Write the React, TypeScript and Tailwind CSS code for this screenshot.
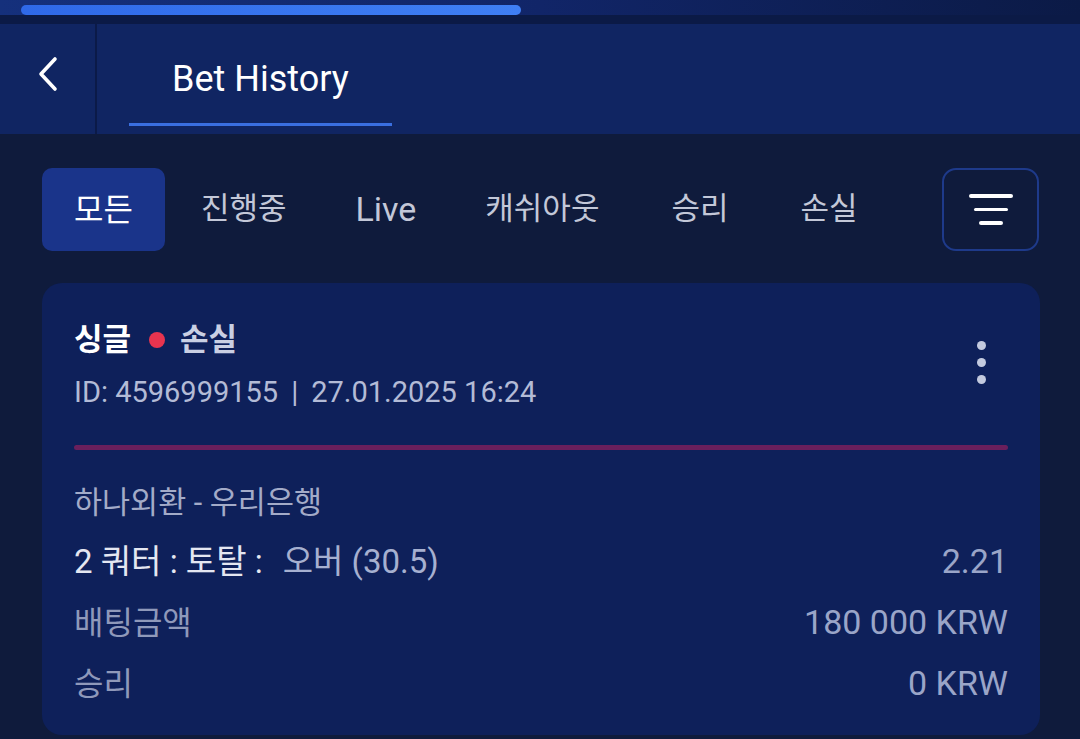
import React from 'react'

const tabs = ['모든', '진행중', 'Live', '캐쉬아웃', '승리', '손실']

const BackIcon = () => (
  <svg width="22" height="36" viewBox="0 0 22 36" fill="none">
    <path d="M18 3 L4 18 L18 33" stroke="#ffffff" strokeWidth="3.6" strokeLinecap="round" strokeLinejoin="round" />
  </svg>
)

const FilterIcon = () => (
  <div className="flex flex-col items-center gap-[10px]">
    <span className="block h-[3.5px] w-[44px] rounded-full bg-white" />
    <span className="block h-[3.5px] w-[34px] rounded-full bg-white" />
    <span className="block h-[3.5px] w-[24px] rounded-full bg-white" />
  </div>
)

const Row: React.FC<{ label: React.ReactNode; value: string }> = ({ label, value }) => (
  <div className="flex h-[61px] items-center justify-between">
    <div>{label}</div>
    <div className="text-[34px] text-[#9aa5c8]">{value}</div>
  </div>
)

export default function App() {
  return (
    <div
      className="min-h-[739px] w-[1080px] bg-[#0f1b3c] text-white"
      style={{ fontFamily: 'Roboto, "Noto Sans CJK KR", sans-serif' }}
    >
      {/* top progress */}
      <div className="h-[24px] bg-[#0b1a46]">
        <div className="h-[15px] bg-linear-to-r from-[#15307c] via-[#112568] to-[#0b1a46] pl-[21px] pt-[5px]">
          <div className="h-[10px] w-[500px] rounded-full bg-linear-to-r from-[#2f69e8] to-[#3f7ff4]" />
        </div>
      </div>

      {/* header */}
      <header className="flex h-[110px] bg-[#102562]">
        <button className="flex w-[95px] items-center justify-center pb-[10px]">
          <BackIcon />
        </button>
        <div className="w-[2px] bg-[#0b1a48]" />
        <div className="ml-[32px] mb-[8px] flex items-center border-b-[3px] border-[#3a6fe0] px-[43px] pt-[10px]">
          <span className="text-[36px] leading-none">Bet History</span>
        </div>
      </header>

      {/* tabs */}
      <div className="mt-[34px] flex h-[83px] items-stretch pl-[42px] pr-[41px]">
        {tabs.map((t, i) =>
          i === 0 ? (
            <div key={t} className="flex items-center rounded-[10px] bg-[#1a348a] px-8 text-[32px] text-white">
              {t}
            </div>
          ) : (
            <div
              key={t}
              className={
                t === 'Live'
                  ? 'flex items-center px-[33px] text-[34px] text-[#c3c8d8]'
                  : 'flex items-center px-[36px] text-[31px] text-[#c3c8d8]'
              }
            >
              {t}
            </div>
          )
        )}
        <button className="ml-auto flex w-[97px] items-center justify-center rounded-[14px] border-2 border-[#1e3a8a]">
          <FilterIcon />
        </button>
      </div>

      {/* card */}
      <div className="ml-[42px] mr-[40px] mt-[32px] rounded-[20px] bg-[#0e205a] px-8 pb-[21px] pt-[37px]">
        <div className="flex justify-between">
          <div>
            <div className="flex h-[40px] items-center text-[31px] font-bold">
              <span className="text-white">싱글</span>
              <span className="ml-[18px] mr-[15px] block h-[16px] w-[16px] rounded-full bg-[#e8344f]" />
              <span className="text-[#c9cfe3]">손실</span>
            </div>
            <div className="mt-[15px] flex h-[36px] items-center text-[29px] text-[#b3bbd6]">
              <span>ID: 4596999155</span>
              <span className="mx-[13px]">|</span>
              <span>27.01.2025 16:24</span>
            </div>
          </div>
          <div className="flex flex-col gap-[8px] pr-[22px] pt-[21px]">
            <span className="block h-[9px] w-[9px] rounded-full bg-[#c3cadf]" />
            <span className="block h-[9px] w-[9px] rounded-full bg-[#c3cadf]" />
            <span className="block h-[9px] w-[9px] rounded-full bg-[#c3cadf]" />
          </div>
        </div>

        <div className="mt-[34px] h-[5px] rounded-full bg-[#6a1f5c]" />

        <div className="mt-[20px] text-[32px]">
          <div className="flex h-[61px] items-center pt-[4px] text-[30.5px] text-[#a3abc8]">하나외환 - 우리은행</div>
          <Row
            label={
              <span className="text-[33px]">
                <span className="text-[#e4e7f1]">2 쿼터 : 토탈 :</span>
                <span className="ml-[20px] text-[#a6b0d0]">오버 (30.5)</span>
              </span>
            }
            value="2.21"
          />
          <Row label={<span className="text-[#8f99ba]">배팅금액</span>} value="180 000 KRW" />
          <Row label={<span className="text-[#8f99ba]">승리</span>} value="0 KRW" />
        </div>
      </div>
    </div>
  )
}
